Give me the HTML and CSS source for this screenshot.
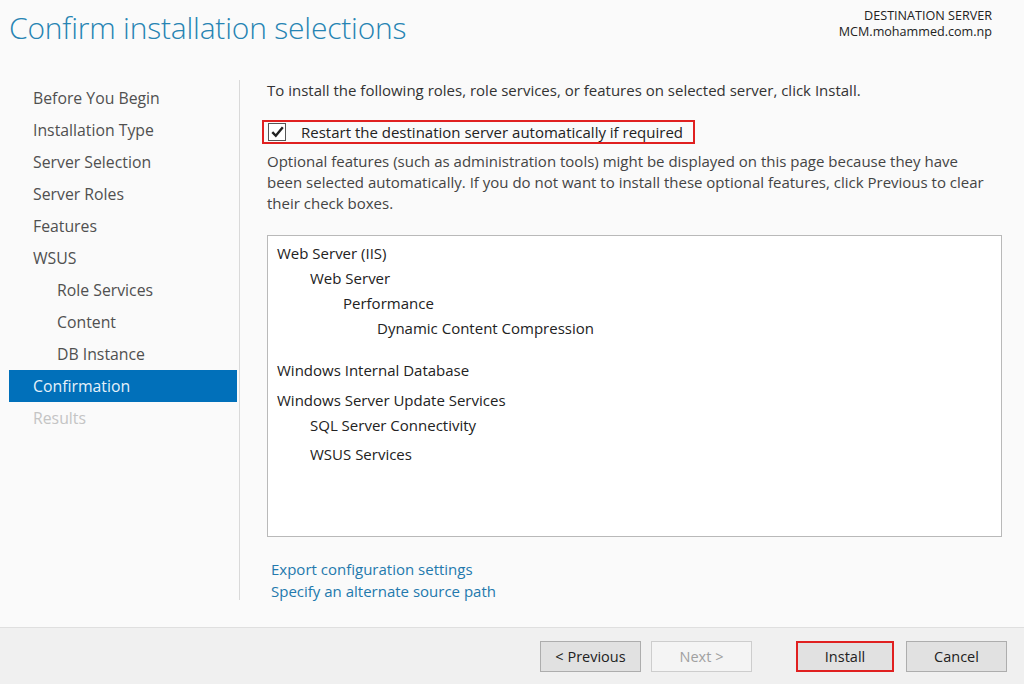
FILE: index.html
```html
<!DOCTYPE html>
<html>
<head>
<meta charset="utf-8">
<link rel="stylesheet" href="styles.css">
</head>
<body>
<div class="page">
  <header class="header">
    <h1 class="title">Confirm installation selections</h1>
    <div class="dest">
      <div>DESTINATION SERVER</div>
      <div>MCM.mohammed.com.np</div>
    </div>
  </header>
  <div class="main">
    <nav class="sidebar">
      <div class="nav-item">Before You Begin</div>
      <div class="nav-item">Installation Type</div>
      <div class="nav-item">Server Selection</div>
      <div class="nav-item">Server Roles</div>
      <div class="nav-item">Features</div>
      <div class="nav-item">WSUS</div>
      <div class="nav-item sub">Role Services</div>
      <div class="nav-item sub">Content</div>
      <div class="nav-item sub">DB Instance</div>
      <div class="nav-item active">Confirmation</div>
      <div class="nav-item disabled">Results</div>
    </nav>
    <section class="content">
      <p class="intro">To install the following roles, role services, or features on selected server, click Install.</p>
      <label class="restart">
        <span class="checkbox"><svg width="13" height="12" viewBox="0 0 13 12"><path d="M1.3 6.2 L4.8 9.8 L11.8 1.3" fill="none" stroke="#222" stroke-width="2.4"/></svg></span>
        <span>Restart the destination server automatically if required</span>
      </label>
      <p class="note">Optional features (such as administration tools) might be displayed on this page because they have been selected automatically. If you do not want to install these optional features, click Previous to clear their check boxes.</p>
      <div class="list">
        <div class="li l0">Web Server (IIS)</div>
        <div class="li l1">Web Server</div>
        <div class="li l2">Performance</div>
        <div class="li l3">Dynamic Content Compression</div>
        <div class="li l0 gap">Windows Internal Database</div>
        <div class="li l0 gap2">Windows Server Update Services</div>
        <div class="li l1">SQL Server Connectivity</div>
        <div class="li l1 gap3">WSUS Services</div>
      </div>
      <div class="links">
        <a class="link">Export configuration settings</a>
        <a class="link">Specify an alternate source path</a>
      </div>
    </section>
  </div>
  <footer class="footer">
    <button class="btn">&lt; Previous</button>
    <button class="btn disabled">Next &gt;</button>
    <button class="btn install">Install</button>
    <button class="btn">Cancel</button>
  </footer>
</div>
</body>
</html>
```

FILE: styles.css
```css
* { box-sizing: border-box; }
html, body { margin: 0; padding: 0; }
body {
  background: #fafafa;
  font-family: "Open Sans", "Noto Sans", sans-serif;
  color: #333;
  width: 1024px;
  height: 684px;
  overflow: hidden;
}
.page { display: flex; flex-direction: column; height: 684px; }
.header {
  height: 80px;
  display: flex;
  justify-content: space-between;
  align-items: flex-start;
}
.title {
  margin: 8px 0 0 9px;
  font-weight: 300;
  font-size: 30px;
  line-height: 40px;
  color: #2684b3;
  letter-spacing: -0.2px;
}
.dest {
  margin: 8px 32px 0 0;
  text-align: right;
  font-size: 12.6px;
  line-height: 16px;
  color: #222;
}
.main { display: flex; height: 547px; }
.sidebar {
  width: 240px;
  height: 520px;
  border-right: 1px solid #d9d9d9;
  padding-top: 2px;
}
.nav-item {
  margin-left: 9px;
  width: 228px;
  height: 32px;
  line-height: 32px;
  padding-left: 24px;
  font-size: 15.8px;
  color: #505050;
}
.nav-item.sub { padding-left: 48px; }
.nav-item.active { background: #0170ba; color: #e6f1f9; }
.nav-item.disabled { color: #c4c4c4; }
.content { padding-left: 27px; font-size: 15px; }
.intro { margin: 0; line-height: 20px; color: #333; }
.restart {
  display: flex;
  align-items: center;
  margin: 20px 0 0 -5px;
  width: 433px;
  height: 24px;
  border: 2px solid #e02020;
  padding-left: 4px;
  color: #222;
  font-size: 15px;
}
.checkbox {
  width: 18px;
  height: 18px;
  border: 1px solid #555;
  background: #fff;
  display: flex;
  align-items: center;
  justify-content: center;
  margin-right: 15px;
}
.note { margin: 7px 0 0; line-height: 21px; color: #444; width: 726px; }
.list {
  margin-top: 21px;
  width: 735px;
  height: 302px;
  background: #fff;
  border: 1px solid #b9b9b9;
  padding-top: 7px;
  color: #222;
}
.li { line-height: 20px; height: 25px; padding-left: 9px; }
.l1 { padding-left: 42px; }
.l2 { padding-left: 75px; }
.l3 { padding-left: 109px; }
.gap { margin-top: 17px; height: 30px; }
.gap2 { height: 25px; }
.gap3 { margin-top: 4px; }
.links { margin-top: 21px; padding-left: 4px; display: flex; flex-direction: column; }
.link { color: #2379ad; font-size: 15px; line-height: 22px; }
.footer {
  height: 57px;
  background: #f0f0f0;
  border-top: 1px solid #dfdfdf;
  display: flex;
  align-items: flex-start;
  padding: 13px 0 0 540px;
}
.btn {
  width: 101px;
  height: 31px;
  background: #e1e1e1;
  border: 1px solid #adadad;
  font-family: "Open Sans", "Noto Sans", sans-serif;
  font-size: 14.5px;
  color: #222;
  margin-right: 10px;
  padding: 0;
}
.btn.disabled { background: #f4f4f4; border-color: #cdcdcd; color: #a0a0a0; margin-right: 44px; }
.btn.install { width: 98px; border: 2px solid #e02020; margin-right: 12px; }
```
